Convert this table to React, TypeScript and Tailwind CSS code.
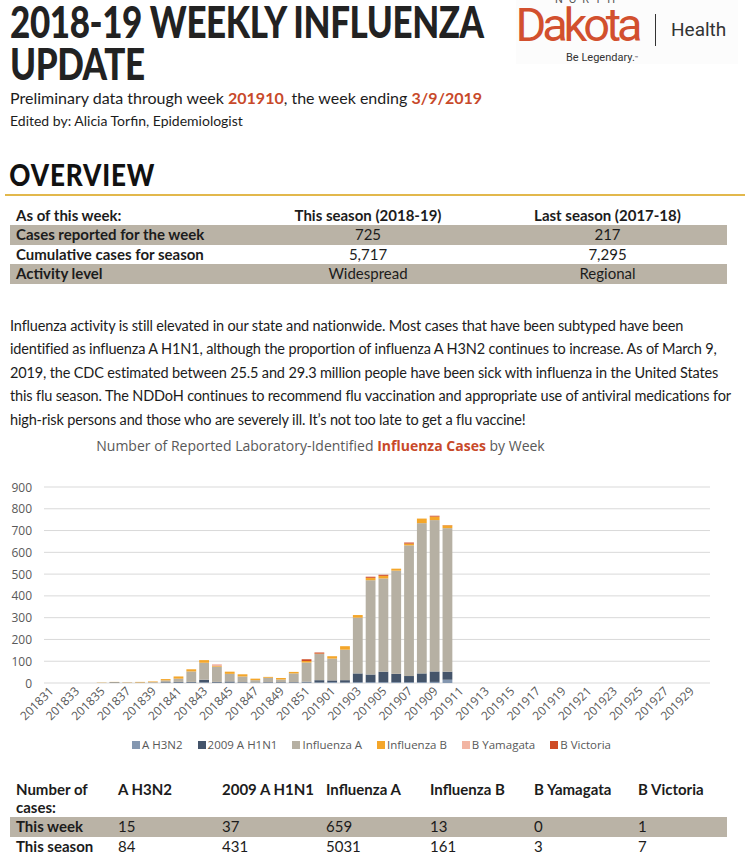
import React from "react";

const weeks: string[] = [
  ...Array.from({ length: 22 }, (_, i) => `2018${31 + i}`),
  ...Array.from({ length: 30 }, (_, i) => `2019${String(i + 1).padStart(2, "0")}`),
];

// [A H3N2, 2009 A H1N1, Influenza A, Influenza B, B Yamagata, B Victoria]
const data: number[][] = [
  [0, 0, 0, 0, 0, 0],
  [0, 0, 0, 0, 0, 0],
  [0, 0, 0, 0, 0, 0],
  [0, 0, 0, 0, 0, 0],
  [0, 0, 1, 1, 0, 0],
  [1, 2, 1, 1, 0, 0],
  [0, 0, 2, 1, 0, 0],
  [0, 0, 3, 2, 0, 0],
  [1, 0, 3, 3, 0, 0],
  [2, 2, 8, 6, 0, 0],
  [2, 3, 15, 10, 0, 0],
  [2, 3, 48, 10, 0, 0],
  [3, 12, 78, 12, 0, 0],
  [2, 3, 70, 3, 8, 0],
  [2, 5, 35, 10, 0, 0],
  [2, 2, 26, 10, 0, 0],
  [2, 1, 10, 7, 0, 0],
  [2, 2, 20, 4, 0, 0],
  [2, 2, 12, 7, 0, 0],
  [2, 2, 40, 7, 0, 0],
  [3, 3, 88, 7, 0, 8],
  [3, 10, 120, 2, 0, 5],
  [4, 8, 100, 11, 0, 0],
  [3, 10, 140, 16, 0, 0],
  [4, 40, 256, 12, 0, 0],
  [4, 35, 433, 10, 1, 5],
  [4, 48, 428, 12, 0, 5],
  [4, 38, 474, 9, 0, 0],
  [4, 28, 600, 8, 0, 5],
  [4, 40, 690, 21, 0, 0],
  [5, 48, 695, 16, 0, 4],
  [15, 37, 659, 13, 0, 1],
];

const colors = ["#8497b0", "#44546a", "#b6b0a3", "#f4a62a", "#f2b5a3", "#cf4b25"];
const legend = ["A H3N2", "2009 A H1N1", "Influenza A", "Influenza B", "B Yamagata", "B Victoria"];

const PL = 44;
const PR = 710;
const STEP = (PR - PL) / 52;
const Y0 = 213;
const K = 196 / 900;

function Chart() {
  return (
    <svg width={751} height={262} className="block">
      {Array.from({ length: 10 }, (_, i) => {
        const y = Y0 - i * 100 * K;
        return (
          <g key={i}>
            <line x1={PL} x2={PR} y1={y} y2={y} stroke="#d9d9d9" strokeWidth={1} />
            <text
              x={32}
              y={y + 4.5}
              textAnchor="end"
              fontSize={12}
              fill="#595959"
              fontFamily="'Open Sans', sans-serif"
            >
              {i * 100}
            </text>
          </g>
        );
      })}
      {data.map((seg, i) => {
        const cx = PL + STEP * (i + 0.5);
        let acc = 0;
        return (
          <g key={i}>
            {seg.map((v, j) => {
              if (!v) return null;
              const y = Y0 - (acc + v) * K;
              const h = v * K;
              acc += v;
              return <rect key={j} x={cx - 4.9} y={y} width={9.8} height={h} fill={colors[j]} />;
            })}
          </g>
        );
      })}
      {weeks.map((w, i) => {
        if (i % 2) return null;
        const cx = PL + STEP * (i + 0.5) + 4;
        const y = Y0 + 9;
        return (
          <text
            key={w}
            x={cx}
            y={y}
            textAnchor="end"
            fontSize={12}
            fill="#595959"
            fontFamily="'Open Sans', sans-serif"
            transform={`rotate(-45 ${cx} ${y})`}
          >
            {w}
          </text>
        );
      })}
    </svg>
  );
}

export default function App() {
  return (
    <div className="w-[751px] h-[856px] overflow-hidden bg-white text-[#1c1c1c] font-['Lato',sans-serif]">
      {/* Header */}
      <div className="flex">
        <div className="w-[500px] shrink-0 pl-[10px]">
          <h1 className="font-black text-[44px] leading-[42px] tracking-[-0.5px] text-[#222] origin-left scale-x-[0.795] whitespace-nowrap">
            <div>2018-19 WEEKLY INFLUENZA</div>
            <div>UPDATE</div>
          </h1>
          <div className="mt-[4px] text-[16px] leading-[20px] whitespace-nowrap">
            Preliminary data through week <span className="font-bold text-[#c8492a]">201910</span>, the week ending{" "}
            <span className="font-bold text-[#c8492a]">3/9/2019</span>
          </div>
          <div className="mt-[4px] text-[14px] leading-[18px] whitespace-nowrap">
            Edited by: Alicia Torfin, Epidemiologist
          </div>
        </div>
        <div className="ml-[16px] w-[222px] h-[64px] shrink-0 bg-[#fcfcfc] font-['Roboto',sans-serif] overflow-hidden">
          <div className="flex items-start">
            <div className="flex flex-col items-center w-[124px]">
              <div className="-mt-[5px] text-[11px] leading-[10px] tracking-[6px] pl-[20px] text-[#555]">NORTH</div>
              <div className="text-[47px] leading-[40px] tracking-[-4.2px] text-[#d2502e] pr-[2px]">Dakota</div>
            </div>
            <div className="w-px h-[32px] bg-[#333] ml-[15px] mt-[14px]" />
            <div className="ml-[15px] mt-[20px] text-[19px] leading-[20px] text-[#333]">Health</div>
          </div>
          <div className="ml-[50px] mt-[6px] text-[11px] leading-[12px] text-[#333] whitespace-nowrap">
            Be Legendary.<span className="text-[6px] align-top">™</span>
          </div>
        </div>
      </div>

      {/* Overview */}
      <div className="px-[5px] mt-[29px]">
        <h2 className="pl-[5px] font-black text-[30px] leading-[30px] tracking-[1px] text-[#111] origin-left scale-x-[0.87]">
          OVERVIEW
        </h2>
        <div className="mt-[5px] h-[1.5px] bg-[#e2b84c] w-[740px]" />
      </div>

      <table className="ml-[10px] mt-[10px] w-[717px] border-collapse text-[15px] leading-[19.5px]">
        <colgroup>
          <col className="w-[238px]" />
          <col className="w-[240px]" />
          <col className="w-[239px]" />
        </colgroup>
        <tbody>
          <tr className="font-bold">
            <td className="pl-[6px]">As of this week:</td>
            <td className="text-center">This season (2018-19)</td>
            <td className="text-center">Last season (2017-18)</td>
          </tr>
          <tr className="bg-[#bab3a6]">
            <td className="pl-[6px] font-bold">Cases reported for the week</td>
            <td className="text-center">725</td>
            <td className="text-center">217</td>
          </tr>
          <tr>
            <td className="pl-[6px] font-bold">Cumulative cases for season</td>
            <td className="text-center">5,717</td>
            <td className="text-center">7,295</td>
          </tr>
          <tr className="bg-[#bab3a6]">
            <td className="pl-[6px] font-bold">Activity level</td>
            <td className="text-center">Widespread</td>
            <td className="text-center">Regional</td>
          </tr>
        </tbody>
      </table>

      <p className="mt-[30px] ml-[10px] w-[721px] text-[14.5px] leading-[23.5px] tracking-[-0.15px]">
        Influenza activity is still elevated in our state and nationwide. Most cases that have been subtyped have been
        identified as influenza A H1N1, although the proportion of influenza A H3N2 continues to increase. As of March 9,
        2019, the CDC estimated between 25.5 and 29.3 million people have been sick with influenza in the United States
        this flu season. The NDDoH continues to recommend flu vaccination and appropriate use of antiviral medications for
        high-risk persons and those who are severely ill. It’s not too late to get a flu vaccine!
      </p>

      {/* Chart */}
      <div className="mt-[5px] text-center text-[14px] leading-[20px] text-[#595959] font-['Open_Sans',sans-serif] pr-[110px]">
        Number of Reported Laboratory-Identified <span className="font-bold text-[#c8492a]">Influenza Cases</span> by Week
      </div>
      <div className="mt-[14px]">
        <Chart />
      </div>
      <div className="mt-[5px] flex justify-center gap-[15px] text-[11.5px] leading-[16px] text-[#595959] font-['Open_Sans',sans-serif] pr-[8px]">
        {legend.map((l, i) => (
          <div key={l} className="flex items-center gap-[2px]">
            <span className="inline-block w-[8px] h-[8px]" style={{ background: colors[i] }} />
            <span>{l}</span>
          </div>
        ))}
      </div>

      {/* Bottom table */}
      <table className="ml-[10px] mt-[27px] w-[717px] border-collapse text-[15px] leading-[19.5px]">
        <colgroup>
          <col className="w-[104px]" />
          <col className="w-[104px]" />
          <col className="w-[104px]" />
          <col className="w-[104px]" />
          <col className="w-[104px]" />
          <col className="w-[104px]" />
          <col className="w-[93px]" />
        </colgroup>
        <tbody>
          <tr className="font-bold align-top">
            <td className="pl-[6px] leading-[18px] pb-[1px]">
              Number of
              <br />
              cases:
            </td>
            <td className="pl-[4px] leading-[18px]">A H3N2</td>
            <td className="pl-[4px] leading-[18px]">2009 A H1N1</td>
            <td className="pl-[4px] leading-[18px]">Influenza A</td>
            <td className="pl-[4px] leading-[18px]">Influenza B</td>
            <td className="pl-[4px] leading-[18px]">B Yamagata</td>
            <td className="pl-[4px] leading-[18px]">B Victoria</td>
          </tr>
          <tr className="bg-[#bab3a6]">
            <td className="pl-[6px] font-bold">This week</td>
            <td className="pl-[4px]">15</td>
            <td className="pl-[4px]">37</td>
            <td className="pl-[4px]">659</td>
            <td className="pl-[4px]">13</td>
            <td className="pl-[4px]">0</td>
            <td className="pl-[4px]">1</td>
          </tr>
          <tr>
            <td className="pl-[6px] font-bold">This season</td>
            <td className="pl-[4px]">84</td>
            <td className="pl-[4px]">431</td>
            <td className="pl-[4px]">5031</td>
            <td className="pl-[4px]">161</td>
            <td className="pl-[4px]">3</td>
            <td className="pl-[4px]">7</td>
          </tr>
        </tbody>
      </table>
    </div>
  );
}
